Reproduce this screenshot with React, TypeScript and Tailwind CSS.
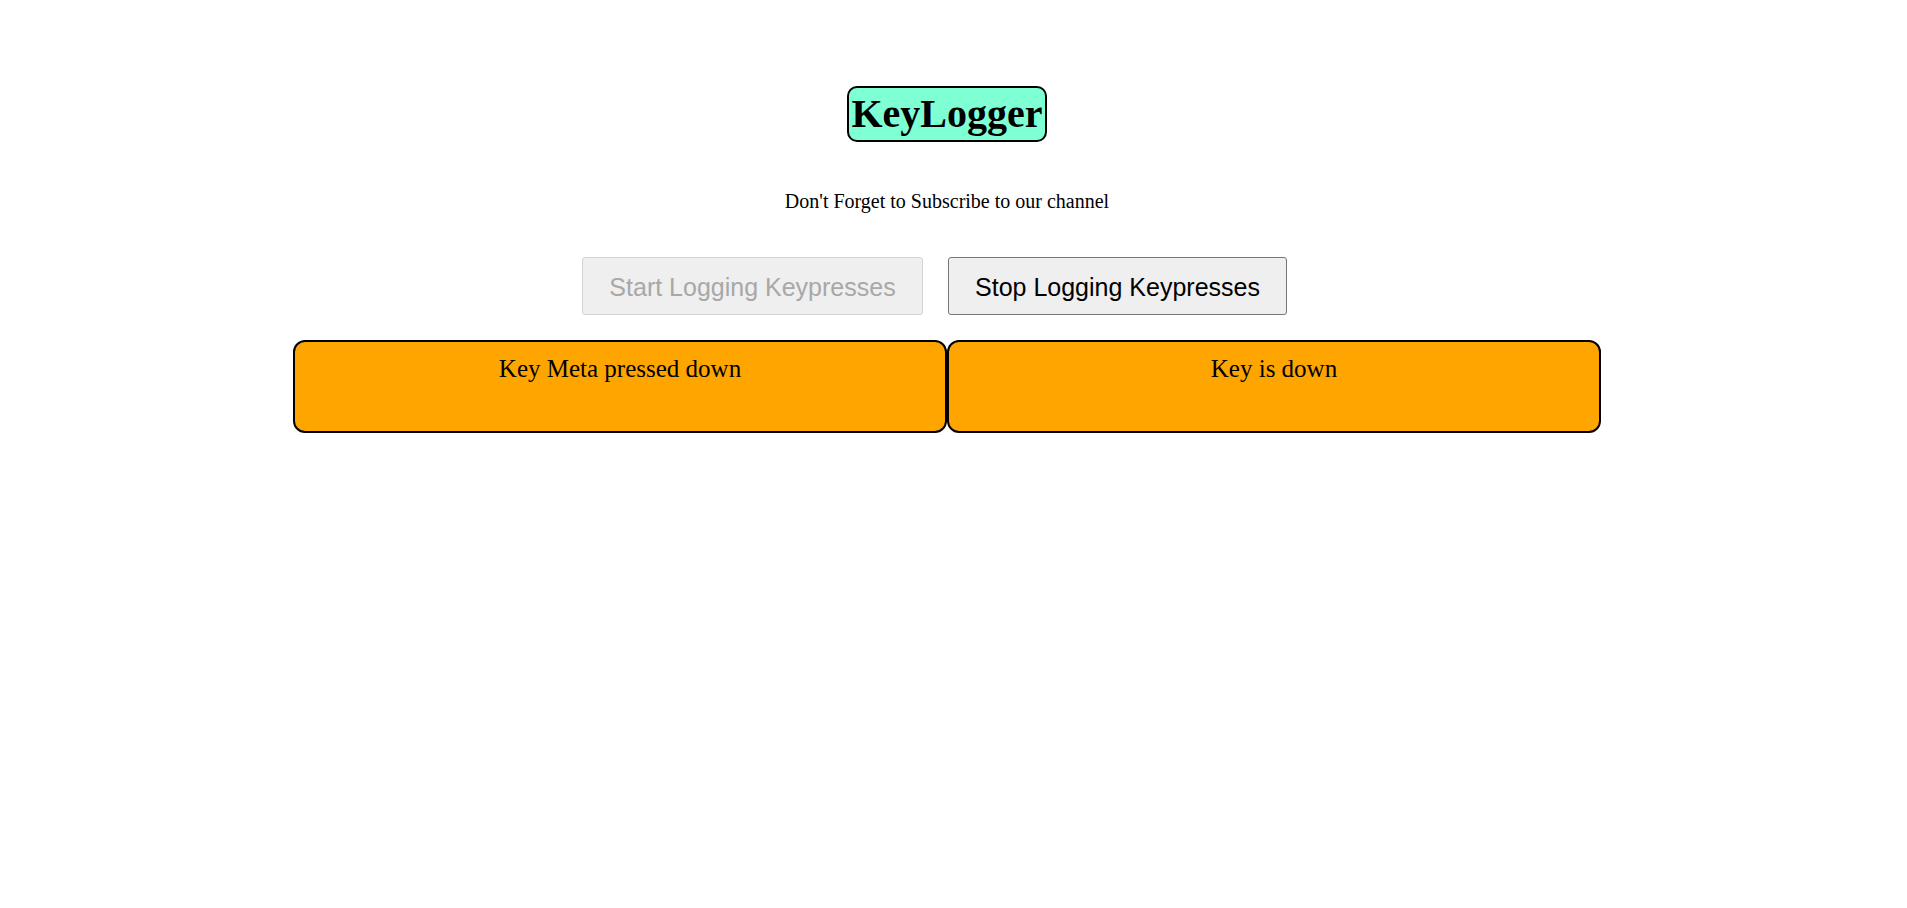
import React from "react";

export default function App() {
  return (
    <div className="min-h-[908px] w-full bg-white">
      <div className="w-[1894px] flex flex-col items-center pt-[86px]">
        <h1
          className="rounded-[10px] border-2 border-black bg-[#7fffd4] px-[2px] py-[3px] text-[40px] font-bold leading-[46px] text-black"
          style={{ fontFamily: '"Liberation Serif", "Times New Roman", serif' }}
        >
          KeyLogger
        </h1>
        <p
          className="mt-[48px] text-[20px] leading-[23px] text-black"
          style={{ fontFamily: '"Liberation Serif", "Times New Roman", serif' }}
        >
          Don't Forget to Subscribe to our channel
        </p>
        <div className="mt-[44px] flex flex-row">
          <button
            disabled
            className="mr-[25px] h-[58px] w-[341px] rounded-[3px] border border-[#d3d3d3] bg-[#efefef] pt-[3px] text-[25px] leading-[29px] text-[#a8a8a8]"
            style={{ fontFamily: '"Liberation Sans", Arial, sans-serif' }}
          >
            Start Logging Keypresses
          </button>
          <button
            className="mr-[25px] h-[58px] w-[339px] rounded-[3px] border border-[#767676] bg-[#efefef] pt-[3px] text-[25px] leading-[29px] text-black"
            style={{ fontFamily: '"Liberation Sans", Arial, sans-serif' }}
          >
            Stop Logging Keypresses
          </button>
        </div>
        <div
          className="mt-[25px] flex flex-row"
          style={{ fontFamily: '"Liberation Serif", "Times New Roman", serif' }}
        >
          <div className="h-[93px] w-[654px] rounded-[12px] border-2 border-black bg-[#ffa500] pt-[12px] text-center text-[25px] leading-[29px] text-black">
            Key Meta pressed down
          </div>
          <div className="h-[93px] w-[654px] rounded-[12px] border-2 border-black bg-[#ffa500] pt-[12px] text-center text-[25px] leading-[29px] text-black">
            Key is down
          </div>
        </div>
      </div>
    </div>
  );
}
